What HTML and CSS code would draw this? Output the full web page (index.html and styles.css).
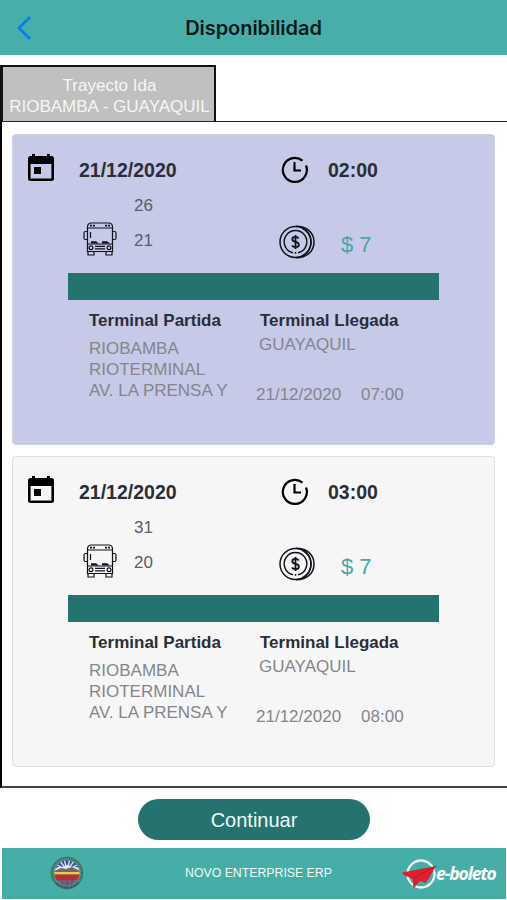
FILE: index.html
```html
<!DOCTYPE html>
<html lang="es">
<head>
<meta charset="utf-8">
<meta name="viewport" content="width=device-width, initial-scale=1.0">
<title>Disponibilidad</title>
<link rel="stylesheet" href="styles.css">
</head>
<body>

<!-- iconos compartidos por las tarjetas -->
<svg class="sprite" aria-hidden="true">
  <symbol id="calendario" viewBox="0 0 28 30">
    <path fill-rule="evenodd" d="M5 1h3v2h12V1h3v2h1.500q2.500 0 2.500 2.500v20q0 2.500-2.500 2.500h-21Q1 28 1 25.500v-20Q1 3 3.500 3H5zM3.600 11v14.500h20.800V11z"/>
    <path d="M7 14h7v7H7z"/>
  </symbol>
  <symbol id="reloj" viewBox="0 0 28 28">
    <path d="M21.500 4.700A12 12 0 1 0 25 9.500M13.500 6v8.500h6.500" fill="none" stroke="#000" stroke-width="2.200"/>
  </symbol>
  <symbol id="bus" viewBox="0 0 34 34">
    <g fill="none" stroke="#10121c" stroke-width="1.200">
      <path d="M4.500 29.500V5q0-4 4-4h17q4 0 4 4v24.500zM4.500 6h25M4.500 22h25"/>
      <path d="M4 9.500H2.500Q1 9.500 1 11v5q0 1.500 1.500 1.500H4M30 9.500h1.500q1.500 0 1.500 1.500v5q0 1.500-1.500 1.500H30M7.500 10v6"/>
      <path d="M5 30v3h6v-3M23 30v3h6v-3M12 24.300h10M12 26.800h10"/>
      <circle cx="8" cy="25.700" r="1.900"/>
      <circle cx="26" cy="25.700" r="1.900"/>
    </g>
    <path d="M8 19.300h5l3 2.200H8zM19 19.300h5l3 2.200h-8zM7 2.800h2v1.800H7zM10 2.800h2v1.800h-2zM22 2.800h2v1.800h-2zM25 2.800h2v1.800h-2z" fill="#10121c"/>
  </symbol>
  <symbol id="moneda" viewBox="0 0 36 34">
    <g fill="none" stroke="#10121c" stroke-width="1.500">
      <circle cx="16.500" cy="17" r="15.500"/>
      <path d="M17 1.300c10 0 18 5.500 18 15.700S27 32.700 17 32.700M23 3c6 3 9 8 9 14s-3 11-9 14"/>
      <path d="M14 27.800a11.300 11.300 0 1 1 5 0"/>
      <path d="M15.800 27.900h1.500M19.600 13.500q-.8-1.700-3.300-1.700-3 0-3 2.400 0 2 3.200 2.700 3.400.7 3.400 2.900 0 2.400-3.400 2.400-2.600 0-3.500-1.800M16.500 10v14" stroke-width="1.800"/>
    </g>
  </symbol>
</svg>

<header class="barra">
  <svg class="volver" viewBox="0 0 16 26"><path d="M14 2 3 13l11 11"/></svg>
  <h1>Disponibilidad</h1>
</header>

<main>
  <div class="pestana">
    <span>Trayecto Ida</span>
    <span>RIOBAMBA - GUAYAQUIL</span>
  </div>

  <section class="lista">
    <article class="viaje activo">
      <div class="fila salida">
        <svg class="i-cal"><use href="#calendario"/></svg>
        <strong>21/12/2020</strong>
        <svg class="i-reloj"><use href="#reloj"/></svg>
        <strong>02:00</strong>
      </div>
      <div class="fila numero">26</div>
      <div class="fila detalle">
        <svg class="i-bus"><use href="#bus"/></svg>
        <span>21</span>
        <svg class="i-moneda"><use href="#moneda"/></svg>
        <span class="precio">$ 7</span>
      </div>
      <div class="franja"></div>
      <div class="terminales">
        <div>
          <h2>Terminal Partida</h2>
          <p class="direccion">RIOBAMBA<br>RIOTERMINAL<br>AV. LA PRENSA Y</p>
        </div>
        <div>
          <h2>Terminal Llegada</h2>
          <p class="destino">GUAYAQUIL</p>
          <p class="llegada"><span>21/12/2020</span><span>07:00</span></p>
        </div>
      </div>
    </article>

    <article class="viaje">
      <div class="fila salida">
        <svg class="i-cal"><use href="#calendario"/></svg>
        <strong>21/12/2020</strong>
        <svg class="i-reloj"><use href="#reloj"/></svg>
        <strong>03:00</strong>
      </div>
      <div class="fila numero">31</div>
      <div class="fila detalle">
        <svg class="i-bus"><use href="#bus"/></svg>
        <span>20</span>
        <svg class="i-moneda"><use href="#moneda"/></svg>
        <span class="precio">$ 7</span>
      </div>
      <div class="franja"></div>
      <div class="terminales">
        <div>
          <h2>Terminal Partida</h2>
          <p class="direccion">RIOBAMBA<br>RIOTERMINAL<br>AV. LA PRENSA Y</p>
        </div>
        <div>
          <h2>Terminal Llegada</h2>
          <p class="destino">GUAYAQUIL</p>
          <p class="llegada"><span>21/12/2020</span><span>08:00</span></p>
        </div>
      </div>
    </article>
  </section>
</main>

<button class="continuar">Continuar</button>

<footer>
  <svg class="escudo" viewBox="0 0 34 34">
    <defs><clipPath id="disco"><circle cx="17" cy="17" r="12.500"/></clipPath></defs>
    <circle cx="17" cy="17" r="16" fill="#5f9188" stroke="#41756f"/>
    <circle cx="17" cy="17" r="14.600" fill="none" stroke="#38605d" stroke-width="1.600" stroke-dasharray="1.200 1"/>
    <g clip-path="url(#disco)">
      <path d="M0 0h34v16H0z" fill="#2f55a4"/>
      <path d="M17 14 5 8M17 14 9 4M17 14 14 3M17 14 20 3M17 14 25 4M17 14 29 8" stroke="#dce8f6" stroke-width="1.300"/>
      <path d="M4 13q5-3 8-2l5-2 6 2q4-1 7 2v3H4z" fill="#e4e5ec"/>
      <path d="M4 15l7-3 5 1 6-2 8 4v2H4z" fill="#75666c"/>
      <path d="M4 16h26v2.500H4z" fill="#e9d13d"/>
      <path d="M4 18.500h26V25H4z" fill="#b92f35"/>
      <path d="M4 24h26v6H4z" fill="#745d80"/>
      <path d="M12 21v9M17 19v11M22 21v9" stroke="#8b3548" stroke-width=".8"/>
    </g>
    <path d="M6 27q11 9 22 0" fill="none" stroke="#245953" stroke-width="2" stroke-dasharray="1.500 .8"/>
  </svg>
  <span class="empresa">NOVO ENTERPRISE ERP</span>
  <div class="marca">
    <svg viewBox="0 0 36 32">
      <circle cx="19" cy="16" r="13.500" fill="none" stroke="#effaf8" stroke-width="2.300"/>
      <path d="M0 14.500 34 8 24 25l-6-2-6.500 7.500-1-9.500L2 17z" fill="#e01f2d"/>
      <path d="M34 8 10.500 20.500" fill="none" stroke="#a31d2b" stroke-width=".9"/>
    </svg>
    <span>e-boleto</span>
  </div>
</footer>

</body>
</html>
```
FILE: styles.css
```css
* {
  box-sizing: border-box;
}
body {
  margin: 0;
  height: 900px;
  font-family: "Liberation Sans", Arial, sans-serif;
  background: #fff;
  color: #2b2e35;
  overflow: hidden;
}
h1, h2, p {
  margin: 0;
}
svg {
  display: block;
  flex: none;
}
.sprite {
  position: absolute;
  width: 0;
  height: 0;
}

/* cabecera */
.barra {
  display: grid;
  grid-template-columns: 40px 1fr 40px;
  align-items: center;
  height: 55px;
  background: #48aea9;
}
.barra h1 {
  font-family: Inter, sans-serif;
  font-size: 20px;
  font-weight: 600;
  letter-spacing: -0.05px;
  text-align: center;
  color: #06191b;
}
.volver {
  width: 16px;
  height: 26px;
  margin-left: 16px;
}
.volver path {
  fill: none;
  stroke: #087cf0;
  stroke-width: 2.8;
}

/* trayecto */
main {
  margin-top: 10px;
}
.pestana {
  display: flex;
  flex-direction: column;
  align-items: center;
  width: 216px;
  height: 56px;
  padding: 8px 0 0 2px;
  background: #c0c0c0;
  border: 2px solid #111;
  border-left-width: 3px;
  border-bottom: 0;
  color: #f6f6f6;
  font-size: 17px;
  line-height: 21px;
  white-space: nowrap;
}
.lista {
  display: flex;
  flex-direction: column;
  gap: 11px;
  height: 667px;
  padding: 12px 12px 0 10px;
  border: 1px solid #222;
  border-left: 2px solid #000;
  border-right: 0;
  border-bottom: 2px solid #444;
}
.viaje {
  flex: none;
  height: 311px;
  padding-top: 18px;
  background: #f6f6f6;
  border: 1px solid #dedfe1;
  border-radius: 4px;
}
.viaje.activo {
  background: #c6c9e7;
  border-color: #ced1e2;
}
.fila {
  display: grid;
  align-items: center;
  height: 36px;
  font-size: 17px;
  color: #5b5d64;
}
.salida {
  grid-template-columns: 66px 202px 47px 1fr;
  height: 34px;
  font-size: 19.5px;
  color: #2b2e35;
}
.numero {
  padding: 2px 0 0 121px;
}
.detalle {
  grid-template-columns: 51px 145px 62px 1fr;
  padding-left: 70px;
}
.i-cal {
  width: 28px;
  height: 30px;
  margin: -4px 0 0 14px;
}
.i-reloj {
  width: 28px;
  height: 28px;
}
.i-bus {
  width: 34px;
  height: 34px;
  margin-top: -4px;
}
.i-moneda {
  width: 36px;
  height: 34px;
  margin-top: 2px;
}
.precio {
  padding-top: 8px;
  font-size: 22px;
  color: #43aaa8;
}
.franja {
  width: 371px;
  height: 27px;
  margin: 14px 0 0 55px;
  background: #25736e;
}
.terminales {
  display: grid;
  grid-template-columns: 171px 1fr;
  padding: 11px 0 0 76px;
  font-size: 17px;
  line-height: 21px;
  color: #85868c;
}
.terminales h2 {
  font-size: 17px;
  line-height: 20px;
  color: #2b2e35;
}
.direccion {
  margin-top: 7px;
}
.destino {
  margin: 3px 0 0 -1px;
}
.llegada {
  display: flex;
  gap: 20px;
  margin: 29px 0 0 -4px;
}

/* pie */
.continuar {
  display: block;
  width: 232px;
  height: 41px;
  margin: 11px 0 8px 138px;
  padding: 2px 0 0;
  border: 0;
  border-radius: 21px;
  background: #25736e;
  color: #eefaf8;
  font-family: inherit;
  font-size: 20px;
}
footer {
  display: grid;
  grid-template-columns: 183px 217px 1fr;
  align-items: center;
  height: 51px;
  margin: 0 1px 0 2px;
  background: #45aea7;
}
.escudo {
  width: 34px;
  height: 34px;
  margin: -2px 0 0 48px;
}
.empresa {
  margin-top: -2px;
  font-size: 12.3px;
  color: #effaf8;
}
.marca {
  display: flex;
  align-items: center;
  color: #fff;
  font-family: "Open Sans", sans-serif;
  font-size: 17.5px;
  font-style: italic;
  font-weight: 700;
  letter-spacing: -1.1px;
}
.marca svg {
  width: 36px;
  height: 32px;
  margin-right: -2px;
}
.marca span {
  margin-top: -2px;
}
```
